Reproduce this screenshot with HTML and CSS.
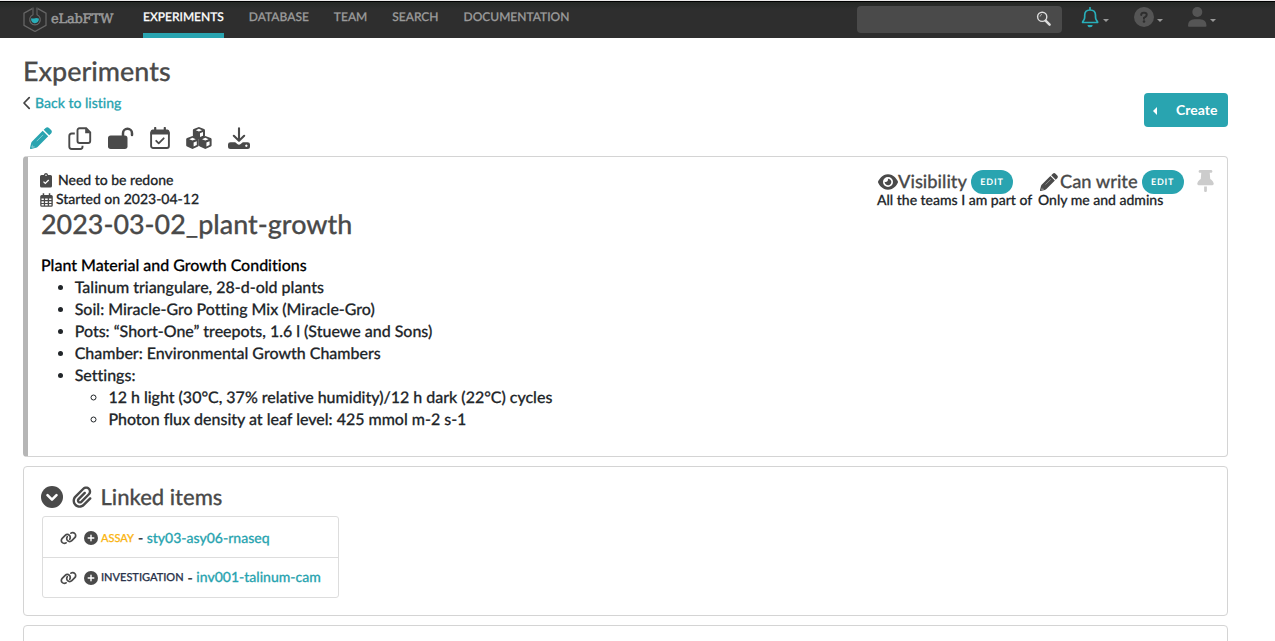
FILE: index.html
```html
<!DOCTYPE html>
<html lang="en">
<head>
<meta charset="utf-8">
<title>Experiments - eLabFTW</title>
<link rel="stylesheet" href="styles.css">
</head>
<body>
<svg class="defs" aria-hidden="true">
  <symbol id="pencil" viewBox="0 0 22 22"><path d="M15.600.9q1.700-1.500 3.400 0L21.100 3q1.500 1.700 0 3.400L19.200 8.300 13.700 2.800zM12.700 3.800 18.200 9.300 7.800 19.700Q7 20.500 6 20.800L1.100 22Q-.2 22.200 0 20.900L1.200 16Q1.500 15 2.300 14.200z"/><path d="M7 13.900 12.800 8.100" stroke="#fff" stroke-width=".8" stroke-linecap="round" opacity=".55"/><path d="M2.800 17.300v1.900h1.900v1.200L2 21l-.9-.9z" fill="#fff" opacity=".35"/></symbol>
  <symbol id="link" viewBox="0 0 640 512"><path d="M579.800 267.700c56.500-56.500 56.500-148 0-204.500c-50-50-128.800-56.500-186.300-15.400l-1.600 1.100c-14.400 10.300-17.700 30.300-7.400 44.600s30.300 17.700 44.600 7.400l1.600-1.100c32.100-22.900 76-19.300 103.800 8.600c31.500 31.500 31.500 82.500 0 114L422.300 334.800c-31.500 31.500-82.500 31.500-114 0c-27.900-27.900-31.500-71.800-8.600-103.800l1.100-1.600c10.300-14.400 6.900-34.400-7.400-44.600s-34.400-6.900-44.600 7.400l-1.100 1.600C206.500 251.200 213 330 263 380c56.500 56.500 148 56.500 204.500 0L579.800 267.700zM60.200 244.300c-56.500 56.500-56.500 148 0 204.500c50 50 128.800 56.500 186.300 15.400l1.600-1.100c14.400-10.300 17.700-30.300 7.400-44.600s-30.300-17.700-44.600-7.400l-1.600 1.100c-32.100 22.900-76 19.300-103.800-8.600C74 372 74 321 105.500 289.500L217.700 177.200c31.500-31.500 82.500-31.500 114 0c27.900 27.900 31.500 71.800 8.600 103.900l-1.100 1.600c-10.300 14.400-6.900 34.400 7.400 44.600s34.400 6.900 44.600-7.400l1.100-1.600C433.500 260.800 427 182 377 132c-56.500-56.500-148-56.500-204.500 0L60.200 244.300z"/></symbol>
  <symbol id="plus" viewBox="0 0 14 14"><circle cx="7" cy="7" r="7"/><path d="M7 4.200v5.600M4.200 7h5.600" stroke="#fff" stroke-width="1.400" stroke-linecap="round"/></symbol>
  <symbol id="cube" viewBox="0 0 14 14"><path fill-rule="evenodd" d="M7 0 12.800 2.100Q13.800 2.500 13.800 3.600V9.900Q13.800 11 12.900 11.400L7 14 1.100 11.400Q.2 11 .2 9.900V3.600Q.2 2.500 1.200 2.100ZM7 2 3.500 3.500 7 4.900 10.500 3.500ZM8.200 7.100V11.300L11.600 9.700V5.600Z"/></symbol>
</svg>

<header class="topbar">
  <a class="brand">
    <svg class="brand-mark" viewBox="0 0 24 25"><path d="M9.200 1.600 1 6.200v12.200l11 6.100 11-6.100V6.200l-8.200-4.600" fill="none" stroke="#656565" stroke-width="1.300"/><path d="M10 .5v7.200a5.300 5.300 0 1 0 4 0V.5" fill="none" stroke="#656565" stroke-width="1.100"/><path d="M8.200 11.200q2 .8 3.800 0t3.800.4c.5 2.600-1.400 4.600-3.800 4.600s-4.400-2.300-3.800-5z" fill="#29aeb9"/></svg>
    <span>eLabFTW</span>
  </a>
  <nav class="menu">
    <a class="active">EXPERIMENTS</a><a>DATABASE</a><a>TEAM</a><a>SEARCH</a><a>DOCUMENTATION</a>
  </nav>
  <div class="search">
    <svg width="16" height="16" viewBox="0 0 16 16" fill="none"><circle cx="6.200" cy="5.800" r="4.600" stroke="#ddd" stroke-width="1.400"/><path d="M4 5.600a2.400 2.400 0 0 1 2-2.200" stroke="#aaa"/><path d="m9.600 9.600 4 4" stroke="#ddd" stroke-width="2.500" stroke-linecap="round"/></svg>
  </div>
  <div class="tools">
    <span class="tool bell"><svg width="18" height="21" viewBox="0 0 18 21"><path d="M9 .7v1.800M2 15.500h14.200q.7 0 .3-.7l-1-1.500q-1-1.300-1-3.200V8.200Q14.500 3 9.100 3 3.700 3 3.700 8.200v1.900q0 1.900-1 3.200l-1 1.500q-.4.700.3.700z" fill="none" stroke="#29aeb9" stroke-width="1.700" stroke-linecap="round"/><path d="M6.500 18h5.200a2.600 2.300 0 0 1-5.200 0z" fill="#29aeb9"/></svg><i></i></span>
    <span class="tool help"><svg width="20" height="20" viewBox="0 0 20 20"><circle cx="10" cy="10" r="10" fill="#555"/><path d="M7.200 7.900q.1-2.200 2.400-2.200h.8q2.300 0 2.300 2.100 0 1.400-1.500 2.200l-1.200.7v1" fill="none" stroke="#2e2e2e" stroke-width="2" stroke-linecap="round"/><circle cx="10" cy="14.500" r="1.300" fill="#2e2e2e"/></svg><i></i></span>
    <span class="tool user"><svg width="19" height="20" viewBox="0 0 19 20"><g fill="#555"><circle cx="9.300" cy="5" r="5"/><path d="M0 19q0-6.700 6.500-6.700h5.500q6.500 0 6.500 6.700 0 .8-.9.800H.9q-.9 0-.9-.8z"/></g></svg><i></i></span>
  </div>
</header>

<main>
  <div class="head">
    <div>
      <h1>Experiments</h1>
      <a class="back"><svg width="9" height="14" viewBox="0 0 9 14"><path d="M6.200 1.700 1 7 6.200 12.300" fill="none" stroke="#444" stroke-width="1.700" stroke-linecap="round" stroke-linejoin="round"/></svg>Back to listing</a>
    </div>
    <button class="create"><i></i><span>Create</span></button>
  </div>

  <div class="actions">
    <svg class="teal" width="22" height="22"><use href="#pencil"/></svg>
    <svg width="24" height="23" viewBox="0 0 24 23"><path d="M11.500 1.300h6.700l4 4V14q0 2-2 2h-8.700q-2 0-2-2V3.300q0-2 2-2z" fill="none" stroke="#4a4a4a" stroke-width="1.900"/><path d="M17.200 1v5.300H22.500z"/><path d="M6.800 6.500H3.800Q1.300 6.500 1.300 9v10.500Q1.300 22 3.800 22h8.500q2.200 0 2.200-2.200v-1" fill="none" stroke="#4a4a4a" stroke-width="1.900"/></svg>
    <svg width="26" height="22" viewBox="0 0 26 22"><rect x="0" y="8.500" width="19.500" height="13.500" rx="2.700"/><path d="M15 9V6.300a4.500 4.500 0 0 1 9 0V8" fill="none" stroke="#4a4a4a" stroke-width="2.500" stroke-linecap="round"/></svg>
    <svg width="20" height="22" viewBox="0 0 20 22"><path d="M.5 7.500V5Q.5 2.500 2.500 2.500h15q2 0 2 2.500V7.500z"/><path d="M5.200 1v3M14.800 1v3" stroke="#4a4a4a" stroke-width="2.200" stroke-linecap="round"/><rect x="1.100" y="4.500" width="17.800" height="16.500" rx="2" fill="none" stroke="#4a4a4a" stroke-width="1.900"/><path d="m6.200 13.800 2.500 2.500 5-5" fill="none" stroke="#4a4a4a" stroke-width="1.800" stroke-linecap="round" stroke-linejoin="round"/></svg>
    <svg width="26" height="22" viewBox="0 0 26 22"><use href="#cube" x="6.300" y="0" width="13.200" height="12.500"/><use href="#cube" x="-.3" y="9" width="13.600" height="13"/><use href="#cube" x="12.500" y="9" width="13.600" height="13"/></svg>
    <svg width="22" height="22" viewBox="0 0 22 22"><path d="M11 1.200v12M5.800 8.800l5.200 5 5.200-5" fill="none" stroke="#4a4a4a" stroke-width="2.100" stroke-linecap="round" stroke-linejoin="round"/><path fill-rule="evenodd" d="M2.500 15.300h4.700l2.100 1.800q1.700 1.500 3.400 0l2.100-1.800h4.700Q22 15.300 22 17.500v2q0 2.500-2.500 2.500h-17Q0 22 0 19.500v-2Q0 15.300 2.500 15.300zM18.300 17.500a1.200 1.200 0 1 0 .1 0z"/></svg>
  </div>

  <section class="card entry">
    <div class="entry-top">
      <div class="meta">
        <div class="status"><svg width="12" height="15" viewBox="0 0 12 15"><path d="M1.500 2h2.300q.5-2 2.200-2t2.200 2h2.300Q12 2 12 3.500v9.500q0 1.500-1.500 1.500h-9Q0 14.500 0 13V3.500Q0 2 1.500 2z"/><circle cx="6" cy="2.200" r=".8" fill="#fff"/><path d="m3.500 8.600 1.800 1.800L8.700 7" fill="none" stroke="#fff" stroke-width="1.300"/></svg><span>Need to be redone</span></div>
        <div class="started"><svg width="13" height="14" viewBox="0 0 13 14"><path fill-rule="evenodd" d="M2.700.3h1.500V2h4.600V.3h1.500V2h.9Q12.800 2 12.800 3.500v8.800q0 1.500-1.600 1.500H1.800Q.2 13.800.2 12.300V3.500Q.2 2 1.800 2h.9zM1.500 5.500v1.600h2.300V5.500zm3.600 0v1.600h2.600V5.500zm4 0v1.600h2.300V5.500zM1.500 8.300v1.600h2.300V8.300zm3.600 0v1.600h2.600V8.300zm4 0v1.600h2.300V8.300zM1.500 11.100v1.500h2.300v-1.500zm3.600 0v1.500h2.600v-1.500zm4 0v1.500h2.300v-1.500z"/></svg><span>Started on 2023-04-12</span></div>
      </div>
      <div class="perms">
        <div class="perm visibility">
          <div class="perm-title"><svg width="20" height="18" viewBox="0 0 576 512"><path d="M288 32c-80.800 0-145.500 36.800-192.600 80.600C48.600 156 17.300 208 2.500 243.700c-3.300 7.900-3.300 16.700 0 24.600C17.300 304 48.600 356 95.400 399.400C142.500 443.200 207.200 480 288 480s145.500-36.800 192.600-80.600c46.800-43.500 78.100-95.400 93-131.100c3.300-7.900 3.300-16.700 0-24.600c-14.900-35.700-46.200-87.700-93-131.100C433.500 68.800 368.800 32 288 32zM144 256a144 144 0 1 1 288 0 144 144 0 1 1 -288 0zm144-64c0 35.300-28.700 64-64 64c-7.100 0-13.900-1.200-20.300-3.300c-5.500-1.800-11.900 1.600-11.700 7.400c.3 6.900 1.300 13.800 3.200 20.700c13.700 51.200 66.400 81.600 117.600 67.900s81.600-66.400 67.900-117.600c-11.100-41.500-47.800-69.400-88.600-71.100c-5.800-.2-9.200 6.100-7.400 11.700c2.100 6.400 3.300 13.200 3.300 20.300z"/></svg><span class="t">Visibility</span><span class="edit">EDIT</span></div>
          <div class="perm-value">All the teams I am part of</div>
        </div>
        <div class="perm write">
          <div class="perm-title"><svg width="18" height="18"><use href="#pencil"/></svg><span class="t">Can write</span><span class="edit">EDIT</span></div>
          <div class="perm-value">Only me and admins</div>
        </div>
        <svg class="pin" width="17" height="22" viewBox="0 0 384 512"><path d="M32 32C32 14.300 46.300 0 64 0H320c17.700 0 32 14.300 32 32s-14.300 32-32 32H290.500l11.400 148.200c36.700 19.900 65.700 53.200 79.500 94.700l1 3c3.300 9.800 1.600 20.500-4.400 28.800s-15.700 13.300-26 13.300H32c-10.300 0-19.900-4.900-26-13.300s-7.700-19.100-4.400-28.800l1-3c13.800-41.500 42.800-74.800 79.500-94.700L93.500 64H64C46.300 64 32 49.700 32 32zM160 384h64v96c0 17.700-14.300 32-32 32s-32-14.300-32-32V384z"/></svg>
      </div>
    </div>
    <h2><span>2023-03-02_plant-growth</span></h2>
    <div class="body">
      <p>Plant Material and Growth Conditions</p>
      <ul>
        <li>Talinum triangulare, 28-d-old plants</li>
        <li>Soil: Miracle-Gro Potting Mix (Miracle-Gro)</li>
        <li>Pots: “Short-One” treepots, 1.6 l (Stuewe and Sons)</li>
        <li>Chamber: Environmental Growth Chambers</li>
        <li>Settings:
          <ul>
            <li>12 h light (30°C, 37% relative humidity)/12 h dark (22°C) cycles</li>
            <li>Photon flux density at leaf level: 425 mmol m-2 s-1</li>
          </ul>
        </li>
      </ul>
    </div>
  </section>

  <section class="card linked">
    <h3>
      <svg width="22" height="22" viewBox="0 0 22 22"><circle cx="11" cy="11" r="11"/><path d="m6.500 9.200 4.500 4.500 4.500-4.500" fill="none" stroke="#fff" stroke-width="2.600" stroke-linecap="round" stroke-linejoin="round"/></svg>
      <svg width="20" height="22" viewBox="0 0 448 512"><path d="M364.200 83.800c-24.400-24.400-64-24.400-88.400 0l-184 184c-42.100 42.100-42.100 110.300 0 152.400s110.300 42.100 152.400 0l152-152c10.900-10.900 28.700-10.900 39.600 0s10.900 28.700 0 39.600l-152 152c-64 64-167.600 64-231.600 0s-64-167.600 0-231.600l184-184c46.300-46.300 121.300-46.300 167.600 0s46.300 121.300 0 167.600l-176 176c-28.600 28.600-75 28.600-103.600 0s-28.600-75 0-103.600l144-144c10.900-10.900 28.700-10.900 39.600 0s10.900 28.700 0 39.600l-144 144c-6.700 6.700-6.700 17.700 0 24.400s17.700 6.700 24.400 0l176-176c24.400-24.400 24.400-64 0-88.400z"/></svg>
      <span>Linked items</span>
    </h3>
    <ul class="items">
      <li><svg width="17" height="14"><use href="#link"/></svg><svg width="14" height="14"><use href="#plus"/></svg><span class="cat assay">ASSAY</span><span class="dash">-</span><a>sty03-asy06-rnaseq</a></li>
      <li><svg width="17" height="14"><use href="#link"/></svg><svg width="14" height="14"><use href="#plus"/></svg><span class="cat investigation">INVESTIGATION</span><span class="dash">-</span><a>inv001-talinum-cam</a></li>
    </ul>
  </section>

  <section class="card next"></section>
</main>
</body>
</html>
```
FILE: styles.css
```css
* { box-sizing: border-box; }
html { overflow: hidden; }
body {
  margin: 0;
  height: 641px;
  overflow: hidden;
  background: #fff;
  color: #212529;
  font-family: Lato, sans-serif;
  font-weight: 500;
  font-size: 14px;
  font-variant-ligatures: none;
  text-rendering: geometricPrecision;
  -webkit-text-stroke: 0.25px;
  white-space: nowrap;
}
svg { display: block; flex: none; fill: #4a4a4a; }
.defs { display: none; }
h1, h2, h3, p, ul { margin: 0; padding: 0; font-weight: 500; }
a { color: #29a4b0; }

.topbar {
  display: flex;
  height: 38px;
  padding-left: 23px;
  border-top: 1px solid #eceaea;
  background: linear-gradient(#000 0 1px, #252825 1px, #2e2e2e 8px);
}
.brand { display: flex; width: 120px; color: #999; }
.brand-mark { width: 24px; height: 25px; margin-top: 6px; fill: none; }
.brand span {
  margin: 9px 0 0 4px;
  font: 500 13px/20px "DejaVu Serif", serif;
  letter-spacing: -0.2px;
  -webkit-text-stroke: 0.5px;
}
.menu { display: flex; gap: 25px; width: 714px; }
.menu a {
  height: 37px;
  padding-top: 8px;
  color: #9b9b9b;
  font-size: 12px;
  line-height: 16px;
}
.menu .active { color: #fff; border-bottom: 5px solid #29a4b0; }
.search {
  display: flex;
  justify-content: flex-end;
  width: 205px;
  height: 27px;
  margin-top: 5px;
  padding: 5px 10px 0 0;
  border-radius: 4px;
  background: #4a4a4a;
}
.search svg { fill: none; }
.tools { display: flex; padding: 6px 0 0 19px; }
.tool { display: flex; width: 53px; }
.tool.user { margin-left: 1px; }
.tool i {
  width: 6px;
  height: 3px;
  margin: 12px 0 0 4px;
  background: #999;
  clip-path: polygon(0 0, 100% 0, 50% 100%);
}
.help i, .user i { margin-left: 3px; }

main { padding: 0 47px 0 23px; }
.head { display: flex; justify-content: space-between; height: 88px; }
h1 {
  padding-top: 16px;
  color: #4a4a4a;
  font-size: 26.9px;
  line-height: 34px;
}
.back { display: flex; gap: 3px; line-height: 18px; margin-top: 6px; }
.back svg { margin-top: 2px; }
.create {
  display: flex;
  align-items: center;
  gap: 19px;
  width: 84px;
  height: 34px;
  margin-top: 55px;
  padding: 0 0 0 9px;
  border: 0;
  border-radius: 4px;
  background: #29a4b0;
  color: #fff;
  font: bold 14px Lato, sans-serif;
  -webkit-text-stroke: 0;
}
.create span { padding-bottom: 2px; }
.create i { width: 4px; height: 8px; margin-top: 2px; background: #fff; clip-path: polygon(100% 0, 100% 100%, 0 50%); }

.actions { display: flex; gap: 16px; height: 30px; padding: 1px 0 0 6.5px; }
.actions .teal { fill: #29a4b0; }

.card { border: 1px solid #d4d4d4; border-radius: 4px; }
.entry { height: 301px; padding: 14px 12px 0; border-left: 5px solid #b6b6b6; }
.entry-top { display: flex; justify-content: space-between; height: 38px; }
.meta { line-height: 19px; }
.meta div { display: flex; align-items: center; height: 19px; }
.meta span { padding-bottom: 2px; }
.status { gap: 6px; }
.started { gap: 3px; }
.perms { display: flex; padding-right: 1px; }
.perm.visibility { width: 162px; margin-right: -1px; }
.perm.write { width: 159px; }
.perm-title { display: flex; align-items: center; height: 21px; padding-left: 1px; color: #4a4a4a; font-size: 18.3px; }
.perm-title .t { padding-bottom: 1px; }
.write .perm-title { padding-left: 2px; }
.write .perm-title .t { margin-left: 2px; }
.edit {
  width: 42px;
  height: 24px;
  margin: 1px 0 0 4px;
  border-radius: 12px;
  background: #29a4b0;
  color: #fff;
  font-size: 9px;
  font-weight: 700;
  letter-spacing: .8px;
  line-height: 24px;
  text-align: center;
  -webkit-text-stroke: 0;
}
.perm-value { line-height: 16px; }
.pin { margin-top: -1px; fill: #ccc; }
h2 { padding-left: 1px; color: #4a4a4a; font-size: 26.9px; line-height: 30px; }
.body { padding: 16px 0 0 1px; font-size: 15.97px; line-height: 22px; }
.body p { color: #000; }
.body ul { padding-left: 33.7px; }

.linked { height: 150px; margin-top: 9px; padding: 15px 18px; }
h3 { display: flex; align-items: center; gap: 9px; height: 29px; margin-left: -1.5px; color: #4a4a4a; font-size: 22px; }
h3 span { line-height: 26px; }
.items {
  width: 297px;
  height: 82px;
  margin-top: 5px;
  border: 1px solid #ddd;
  border-radius: 3px;
  list-style: none;
}
.items li { display: flex; align-items: center; height: 40px; padding: 2px 0 0 17px; line-height: 18px; }
.items li + li { border-top: 1px solid #ddd; padding-top: 0; }
.items li svg + svg { margin: 0 3px 0 7px; }
.items a { margin: -1px 0 0 -0.5px; }
.cat { padding-top: 1px; font-size: 11px; }
.assay { color: #fab514; }
.investigation { color: #29324a; }
.dash { margin: 0 4px; }
.next { height: 40px; margin-top: 9px; }
```
